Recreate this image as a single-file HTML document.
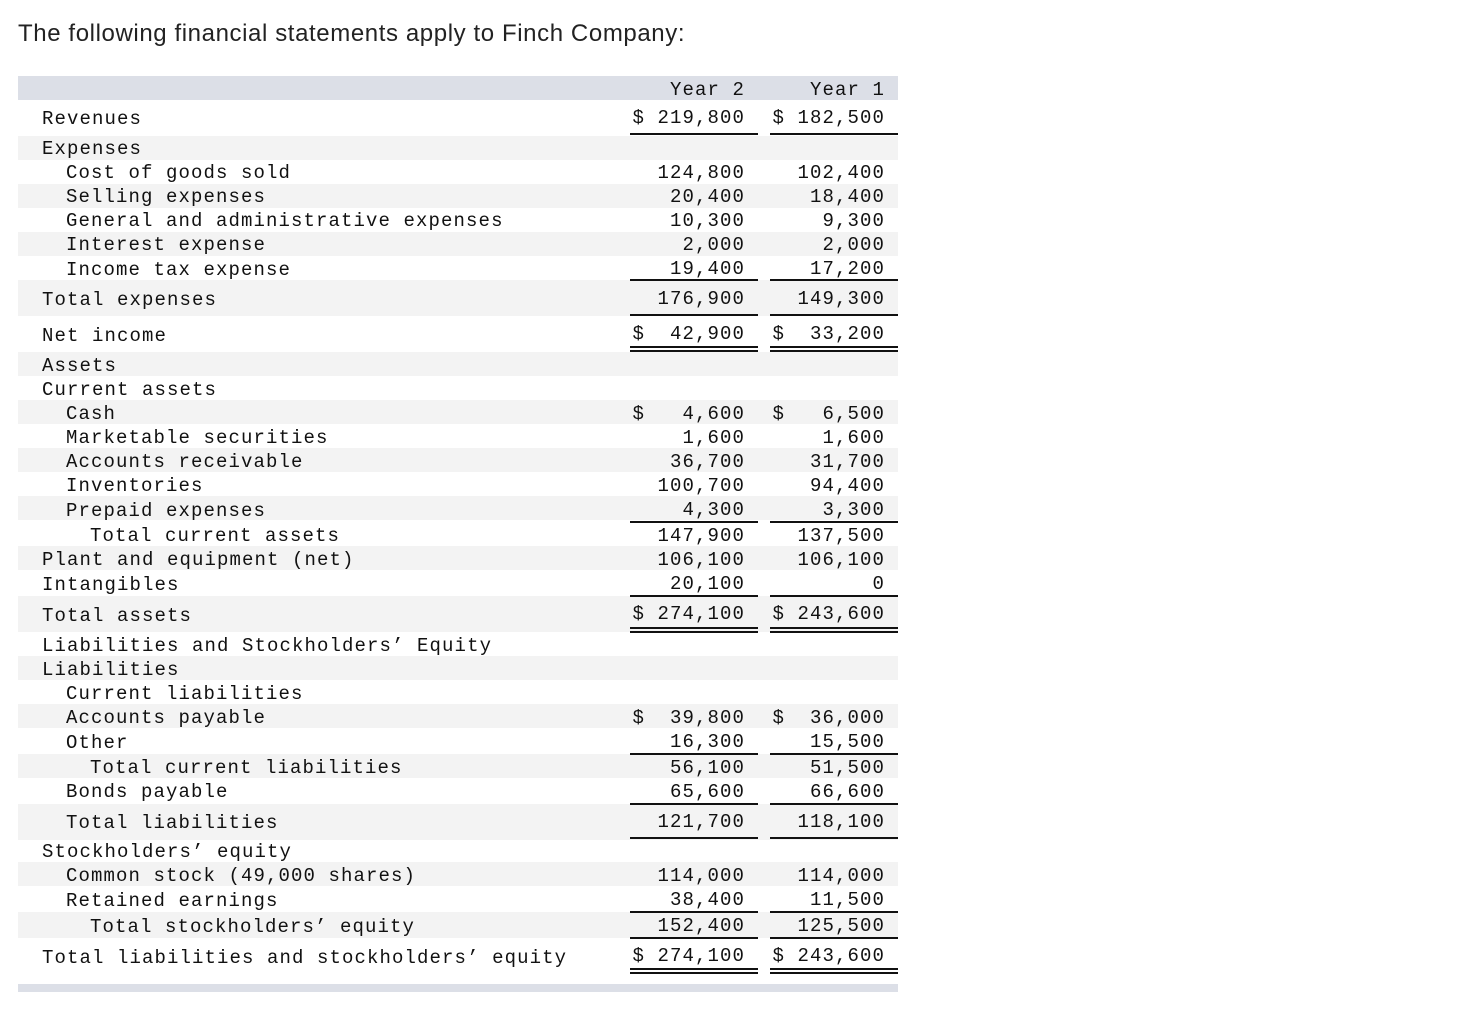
<!DOCTYPE html>
<html><head><meta charset="utf-8"><style>
body{margin:0;width:1480px;height:1012px;background:#fff;position:relative;overflow:hidden;font-family:"Liberation Mono",monospace;color:#111}
.t{position:absolute;left:18px;top:20px;font-family:"Liberation Sans",sans-serif;font-size:24px;letter-spacing:0.6px;color:#222;white-space:nowrap}
.b{position:absolute;left:18px;width:880px}
.g{background:#f3f3f3}
.h{background:#dcdfe7}
.x{position:absolute;font-size:19px;letter-spacing:1.1px;line-height:22px;white-space:pre;margin-top:2px}
.r2{right:735px;text-align:right}
.r1{right:595px;text-align:right}
.l{position:absolute;height:1.5px;background:#111}
</style></head><body>
<div class="t">The following financial statements apply to Finch Company:</div>
<div class="b h" style="top:76px;height:24px"></div>
<div class="b g" style="top:136px;height:24px"></div>
<div class="b g" style="top:184px;height:24px"></div>
<div class="b g" style="top:232px;height:24px"></div>
<div class="b g" style="top:280px;height:36px"></div>
<div class="b g" style="top:352px;height:24px"></div>
<div class="b g" style="top:400px;height:24px"></div>
<div class="b g" style="top:448px;height:24px"></div>
<div class="b g" style="top:496px;height:24px"></div>
<div class="b g" style="top:546px;height:24px"></div>
<div class="b g" style="top:596px;height:36px"></div>
<div class="b g" style="top:656px;height:24px"></div>
<div class="b g" style="top:704px;height:24px"></div>
<div class="b g" style="top:754px;height:24px"></div>
<div class="b g" style="top:804px;height:36px"></div>
<div class="b g" style="top:862px;height:24px"></div>
<div class="b g" style="top:912px;height:26px"></div>
<div class="b h" style="top:984px;height:8px"></div>

<div class="x r2" style="top:77px">Year 2</div><div class="x r1" style="top:77px">Year 1</div>

<div class="x" style="left:42px;top:106px">Revenues</div><div class="x r2" style="top:105px">$ 219,800</div><div class="x r1" style="top:105px">$ 182,500</div>
<div class="x" style="left:42px;top:136px">Expenses</div>
<div class="x" style="left:66px;top:160px">Cost of goods sold</div><div class="x r2" style="top:160px">124,800</div><div class="x r1" style="top:160px">102,400</div>
<div class="x" style="left:66px;top:184px">Selling expenses</div><div class="x r2" style="top:184px">20,400</div><div class="x r1" style="top:184px">18,400</div>
<div class="x" style="left:66px;top:208px">General and administrative expenses</div><div class="x r2" style="top:208px">10,300</div><div class="x r1" style="top:208px">9,300</div>
<div class="x" style="left:66px;top:232px">Interest expense</div><div class="x r2" style="top:232px">2,000</div><div class="x r1" style="top:232px">2,000</div>
<div class="x" style="left:66px;top:257px">Income tax expense</div><div class="x r2" style="top:256px">19,400</div><div class="x r1" style="top:256px">17,200</div>
<div class="x" style="left:42px;top:287px">Total expenses</div><div class="x r2" style="top:286px">176,900</div><div class="x r1" style="top:286px">149,300</div>
<div class="x" style="left:42px;top:323px">Net income</div><div class="x r2" style="top:321px">$  42,900</div><div class="x r1" style="top:321px">$  33,200</div>
<div class="x" style="left:42px;top:353px">Assets</div>
<div class="x" style="left:42px;top:377px">Current assets</div>
<div class="x" style="left:66px;top:401px">Cash</div><div class="x r2" style="top:401px">$   4,600</div><div class="x r1" style="top:401px">$   6,500</div>
<div class="x" style="left:66px;top:425px">Marketable securities</div><div class="x r2" style="top:425px">1,600</div><div class="x r1" style="top:425px">1,600</div>
<div class="x" style="left:66px;top:449px">Accounts receivable</div><div class="x r2" style="top:449px">36,700</div><div class="x r1" style="top:449px">31,700</div>
<div class="x" style="left:66px;top:473px">Inventories</div><div class="x r2" style="top:473px">100,700</div><div class="x r1" style="top:473px">94,400</div>
<div class="x" style="left:66px;top:498px">Prepaid expenses</div><div class="x r2" style="top:497px">4,300</div><div class="x r1" style="top:497px">3,300</div>
<div class="x" style="left:90px;top:523px">Total current assets</div><div class="x r2" style="top:523px">147,900</div><div class="x r1" style="top:523px">137,500</div>
<div class="x" style="left:42px;top:547px">Plant and equipment (net)</div><div class="x r2" style="top:547px">106,100</div><div class="x r1" style="top:547px">106,100</div>
<div class="x" style="left:42px;top:572px">Intangibles</div><div class="x r2" style="top:571px">20,100</div><div class="x r1" style="top:571px">0</div>
<div class="x" style="left:42px;top:603px">Total assets</div><div class="x r2" style="top:601px">$ 274,100</div><div class="x r1" style="top:601px">$ 243,600</div>
<div class="x" style="left:42px;top:633px">Liabilities and Stockholders’ Equity</div>
<div class="x" style="left:42px;top:657px">Liabilities</div>
<div class="x" style="left:66px;top:681px">Current liabilities</div>
<div class="x" style="left:66px;top:705px">Accounts payable</div><div class="x r2" style="top:705px">$  39,800</div><div class="x r1" style="top:705px">$  36,000</div>
<div class="x" style="left:66px;top:730px">Other</div><div class="x r2" style="top:729px">16,300</div><div class="x r1" style="top:729px">15,500</div>
<div class="x" style="left:90px;top:755px">Total current liabilities</div><div class="x r2" style="top:755px">56,100</div><div class="x r1" style="top:755px">51,500</div>
<div class="x" style="left:66px;top:779px">Bonds payable</div><div class="x r2" style="top:779px">65,600</div><div class="x r1" style="top:779px">66,600</div>
<div class="x" style="left:66px;top:810px">Total liabilities</div><div class="x r2" style="top:809px">121,700</div><div class="x r1" style="top:809px">118,100</div>
<div class="x" style="left:42px;top:839px">Stockholders’ equity</div>
<div class="x" style="left:66px;top:863px">Common stock (49,000 shares)</div><div class="x r2" style="top:863px">114,000</div><div class="x r1" style="top:863px">114,000</div>
<div class="x" style="left:66px;top:888px">Retained earnings</div><div class="x r2" style="top:887px">38,400</div><div class="x r1" style="top:887px">11,500</div>
<div class="x" style="left:90px;top:914px">Total stockholders’ equity</div><div class="x r2" style="top:913px">152,400</div><div class="x r1" style="top:913px">125,500</div>
<div class="x" style="left:42px;top:945px">Total liabilities and stockholders’ equity</div><div class="x r2" style="top:943px">$ 274,100</div><div class="x r1" style="top:943px">$ 243,600</div>

<div class="l" style="left:630px;width:128px;top:133px"></div><div class="l" style="left:770px;width:128px;top:133px"></div>
<div class="l" style="left:630px;width:128px;top:279px"></div><div class="l" style="left:770px;width:128px;top:279px"></div>
<div class="l" style="left:630px;width:128px;top:314px"></div><div class="l" style="left:770px;width:128px;top:314px"></div>
<div class="l" style="left:630px;width:128px;top:346px"></div><div class="l" style="left:770px;width:128px;top:346px"></div>
<div class="l" style="left:630px;width:128px;top:350px"></div><div class="l" style="left:770px;width:128px;top:350px"></div>
<div class="l" style="left:630px;width:128px;top:521px"></div><div class="l" style="left:770px;width:128px;top:521px"></div>
<div class="l" style="left:630px;width:128px;top:595px"></div><div class="l" style="left:770px;width:128px;top:595px"></div>
<div class="l" style="left:630px;width:128px;top:627px"></div><div class="l" style="left:770px;width:128px;top:627px"></div>
<div class="l" style="left:630px;width:128px;top:631px"></div><div class="l" style="left:770px;width:128px;top:631px"></div>
<div class="l" style="left:630px;width:128px;top:753px"></div><div class="l" style="left:770px;width:128px;top:753px"></div>
<div class="l" style="left:630px;width:128px;top:803px"></div><div class="l" style="left:770px;width:128px;top:803px"></div>
<div class="l" style="left:630px;width:128px;top:837px"></div><div class="l" style="left:770px;width:128px;top:837px"></div>
<div class="l" style="left:630px;width:128px;top:911px"></div><div class="l" style="left:770px;width:128px;top:911px"></div>
<div class="l" style="left:630px;width:128px;top:937px"></div><div class="l" style="left:770px;width:128px;top:937px"></div>
<div class="l" style="left:630px;width:128px;top:968px"></div><div class="l" style="left:770px;width:128px;top:968px"></div>
<div class="l" style="left:630px;width:128px;top:972px"></div><div class="l" style="left:770px;width:128px;top:972px"></div>
</body></html>
